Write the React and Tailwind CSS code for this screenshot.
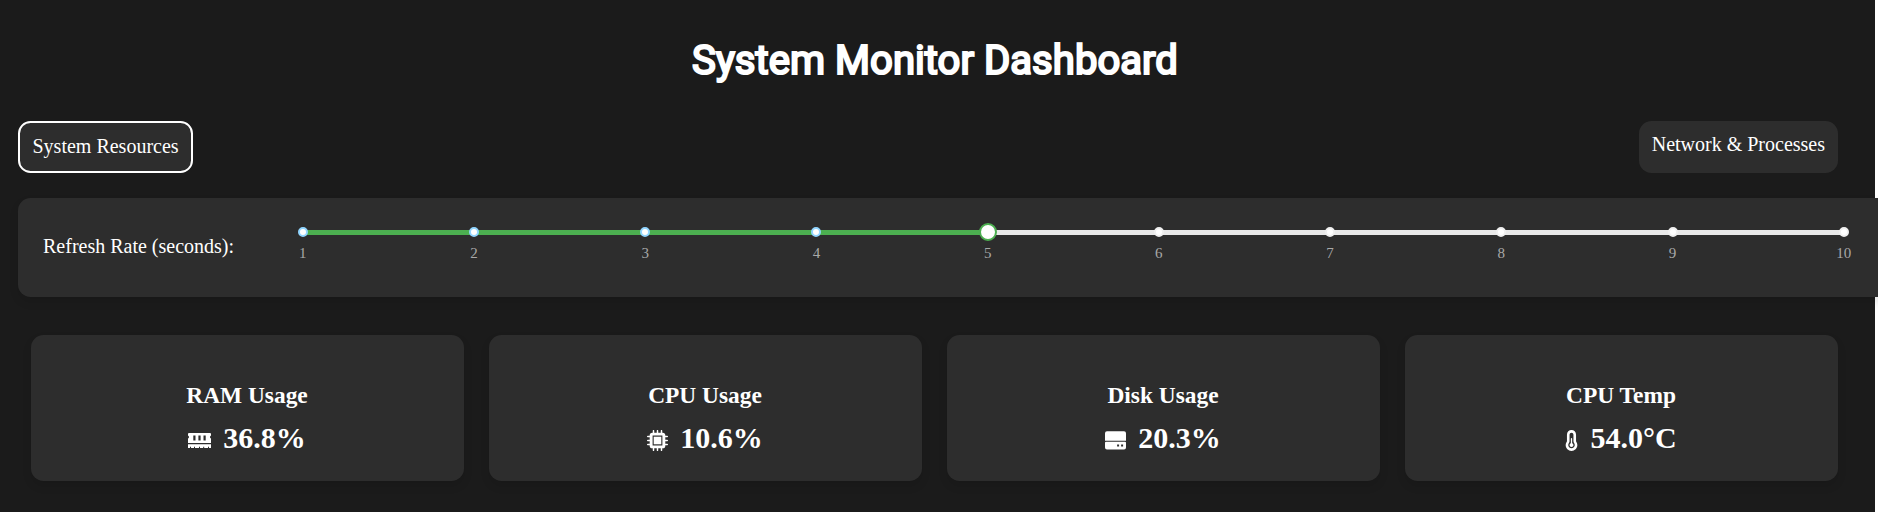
import { FaTemperatureHalf } from "react-icons/fa6";

const REFRESH = 5;
const STEPS = [1, 2, 3, 4, 5, 6, 7, 8, 9, 10];

function MemoryIcon() {
  return (
    <svg className="mt-[5px] h-[21px] w-[23px] shrink-0" viewBox="0 0 23 21" fill="currentColor">
      <path
        fillRule="evenodd"
        d="M1 3H22Q23 3 23 4V5.5Q22 6 22 7T23 8.5V13H0V8.5Q1 8 1 7T0 5.5V4Q0 3 1 3ZM5.3 5.5V10.5H7.5V5.5ZM10.4 5.5V10.5H12.6V5.5ZM15.5 5.5V10.5H17.7V5.5Z"
      />
      <path d="M0 14.2H23V18H21V16.8H20V18H16.2V16.8H15.2V18H12V16.8H11V18H7V16.8H6V18H3V16.8H2V18H0Z" />
    </svg>
  );
}

function ChipIcon() {
  return (
    <svg className="mt-[5px] size-[21px] shrink-0" viewBox="0 0 21 21" fill="currentColor">
      <path
        fillRule="evenodd"
        d="M5.3 2.7H15.7Q18.3 2.7 18.3 5.3V15.7Q18.3 18.3 15.7 18.3H5.3Q2.7 18.3 2.7 15.7V5.3Q2.7 2.7 5.3 2.7ZM5.6 5.6V15.4H15.4V5.6Z"
      />
      <path d="M6.7 6.7H14.3V14.3H6.7Z" />
      <path
        d="M6.5 .7V4M10.5 .7V4M14.5 .7V4M6.5 17V20.3M10.5 17V20.3M14.5 17V20.3M.7 6.5H4M.7 10.5H4M.7 14.5H4M17 6.5H20.3M17 10.5H20.3M17 14.5H20.3"
        stroke="currentColor"
        strokeWidth="1.5"
        strokeLinecap="round"
      />
    </svg>
  );
}

function DriveIcon() {
  return (
    <svg className="mt-[5px] size-[21px] shrink-0" viewBox="0 0 21 21" fill="currentColor">
      <path d="M2 1.3H19Q21 1.3 21 3.3V10.8H0V3.3Q0 1.3 2 1.3Z" />
      <path
        fillRule="evenodd"
        d="M1 11.8H20Q21 11.8 21 12.8V17.6Q21 19.6 19 19.6H2Q0 19.6 0 17.6V12.8Q0 11.8 1 11.8ZM12.1 14.6V16.6H14.1V14.6ZM16.1 14.6V16.6H18.1V14.6Z"
      />
    </svg>
  );
}

function TempIcon() {
  return <FaTemperatureHalf className="mt-[5px] h-[21px] w-[13px] shrink-0" />;
}

const CARDS = [
  { title: "RAM Usage", value: "36.8%", icon: MemoryIcon },
  { title: "CPU Usage", value: "10.6%", icon: ChipIcon },
  { title: "Disk Usage", value: "20.3%", icon: DriveIcon },
  { title: "CPU Temp", value: "54.0°C", icon: TempIcon },
];

function Slider() {
  return (
    <div className="relative h-[50px] w-[1541px] shrink-0">
      <div className="absolute left-0 top-[7px] h-[5px] w-full rounded-sm bg-[#e9e9e9]" />
      <div
        className="absolute left-0 top-[7px] h-[5px] rounded-sm bg-[#4caf50]"
        style={{ width: `${((REFRESH - 1) / 9) * 100}%` }}
      />
      {STEPS.map((n) => (
        <div
          key={n}
          className="absolute top-1 -ml-[15.25px] flex w-[30px] flex-col items-center"
          style={{ left: `${((n - 1) / 9) * 100}%` }}
        >
          <span
            className={`size-[10px] rounded-full border-2 bg-white ${
              n <= REFRESH ? "border-[#91d5ff]" : "border-[#f0f0f0]"
            }`}
          />
          <span className="mt-[7px] text-[15px] leading-[18px] text-[#a8a8a8]">{n}</span>
        </div>
      ))}
      <div
        className="absolute top-0 -ml-[9.25px] size-[18px] rounded-full border-2 border-[#4caf50] bg-white"
        style={{ left: `${((REFRESH - 1) / 9) * 100}%` }}
      />
    </div>
  );
}

function Card({ title, value, icon: Icon }) {
  return (
    <div className="flex h-[146px] flex-1 flex-col items-center rounded-[12.5px] bg-[#2d2d2d] pr-px pt-[47px] shadow-[0_5px_10px_rgba(0,0,0,0.1)]">
      <h3 className="text-[23.4px] font-bold leading-[27px]">{title}</h3>
      <div className="mt-3 flex items-center gap-3 text-[30px] font-bold leading-[34px]">
        <Icon />
        <span>{value}</span>
      </div>
    </div>
  );
}

export default function App() {
  return (
    <div className="h-[512px] w-full overflow-hidden bg-white font-['Liberation_Serif',serif] text-xl leading-[23px] text-white">
      <div className="flex h-full w-[1875px] flex-col bg-[#1b1b1b] pl-[18px]">
        <h1 className="mt-9 h-[50px] w-[1834px] text-center font-['Roboto',sans-serif] text-[40px] font-normal leading-[50px] tracking-[0.05px] [-webkit-text-stroke:2.2px_white]">
          System Monitor Dashboard
        </h1>
        <nav className="mt-[35px] flex h-[52px] w-[1820px] justify-between">
          <button className="flex items-start rounded-[12.5px] border-2 border-white bg-[#2d2d2d] px-[12.5px] pt-3">
            System Resources
          </button>
          <button className="flex items-start rounded-[12.5px] bg-[#2d2d2d] px-[13px] pt-3">
            Network &amp; Processes
          </button>
        </nav>
        <section className="mt-[25px] flex h-[99px] w-[1900px] shrink-0 rounded-[12.5px] bg-[#2d2d2d] pl-[25px] pt-[25px] shadow-[0_5px_10px_rgba(0,0,0,0.1)]">
          <label className="mt-3 w-[260px] shrink-0">Refresh Rate (seconds):</label>
          <Slider />
        </section>
        <main className="mt-[38px] flex w-[1820px] gap-[25px] pl-[13px]">
          {CARDS.map((c) => (
            <Card key={c.title} {...c} />
          ))}
        </main>
      </div>
    </div>
  );
}
